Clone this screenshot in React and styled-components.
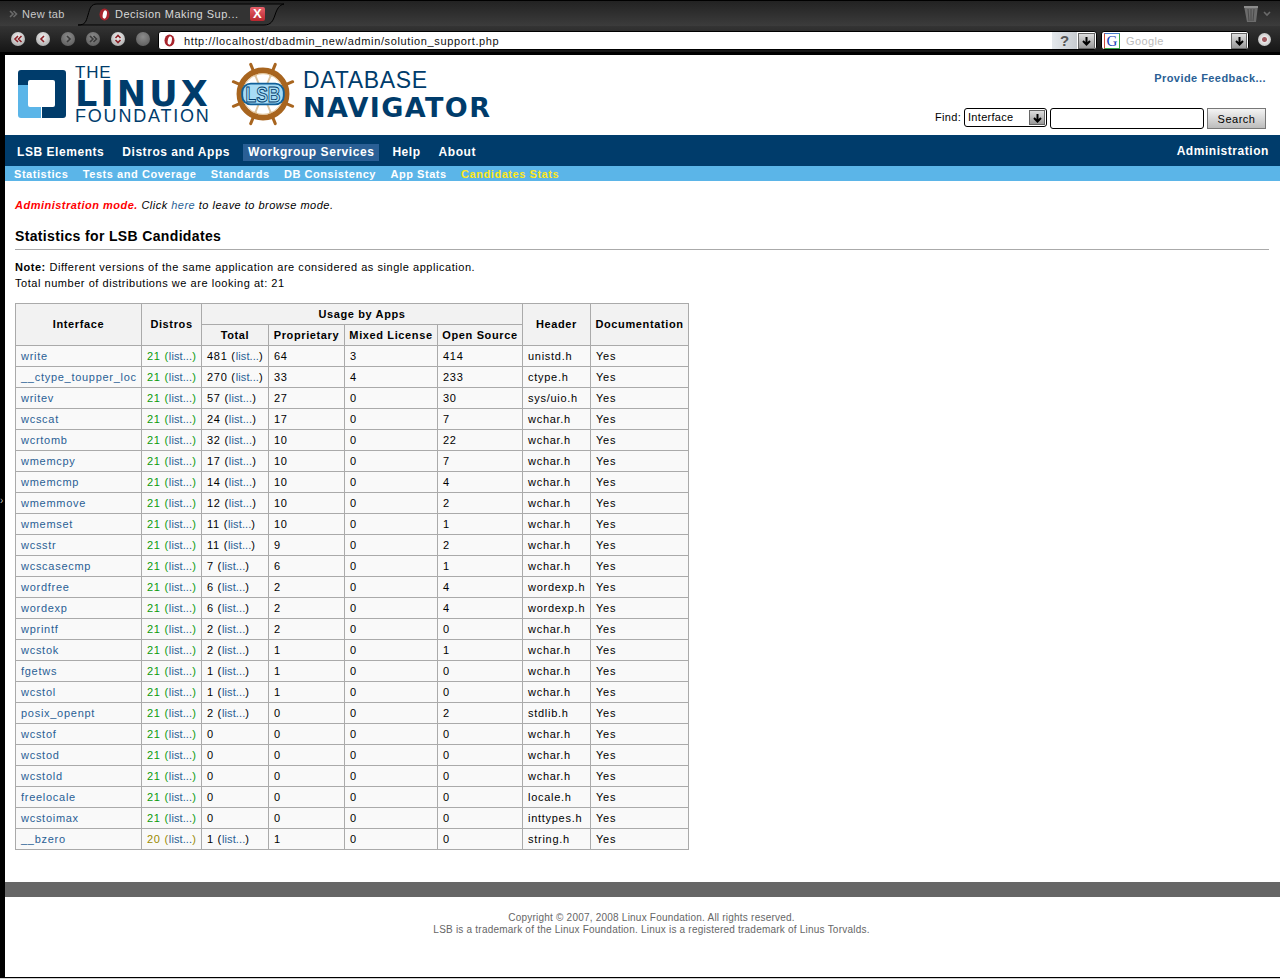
import React from 'react'
import styled, { createGlobalStyle } from 'styled-components'

const GlobalStyle = createGlobalStyle`
  html, body { margin: 0; padding: 0; height: 979px; overflow: hidden; background: #000; }
  body { font-family: "Liberation Sans", Arial, sans-serif; font-size: 11px; color: #000; }
  * { box-sizing: border-box; }
`

const rows = [
  ['write', 21, 481, 64, 3, 414, 'unistd.h'],
  ['__ctype_toupper_loc', 21, 270, 33, 4, 233, 'ctype.h'],
  ['writev', 21, 57, 27, 0, 30, 'sys/uio.h'],
  ['wcscat', 21, 24, 17, 0, 7, 'wchar.h'],
  ['wcrtomb', 21, 32, 10, 0, 22, 'wchar.h'],
  ['wmemcpy', 21, 17, 10, 0, 7, 'wchar.h'],
  ['wmemcmp', 21, 14, 10, 0, 4, 'wchar.h'],
  ['wmemmove', 21, 12, 10, 0, 2, 'wchar.h'],
  ['wmemset', 21, 11, 10, 0, 1, 'wchar.h'],
  ['wcsstr', 21, 11, 9, 0, 2, 'wchar.h'],
  ['wcscasecmp', 21, 7, 6, 0, 1, 'wchar.h'],
  ['wordfree', 21, 6, 2, 0, 4, 'wordexp.h'],
  ['wordexp', 21, 6, 2, 0, 4, 'wordexp.h'],
  ['wprintf', 21, 2, 2, 0, 0, 'wchar.h'],
  ['wcstok', 21, 2, 1, 0, 1, 'wchar.h'],
  ['fgetws', 21, 1, 1, 0, 0, 'wchar.h'],
  ['wcstol', 21, 1, 1, 0, 0, 'wchar.h'],
  ['posix_openpt', 21, 2, 0, 0, 2, 'stdlib.h'],
  ['wcstof', 21, 0, 0, 0, 0, 'wchar.h'],
  ['wcstod', 21, 0, 0, 0, 0, 'wchar.h'],
  ['wcstold', 21, 0, 0, 0, 0, 'wchar.h'],
  ['freelocale', 21, 0, 0, 0, 0, 'locale.h'],
  ['wcstoimax', 21, 0, 0, 0, 0, 'inttypes.h'],
  ['__bzero', 20, 1, 1, 0, 0, 'string.h'],
]

const Window = styled.div`
  width: 1280px;
  height: 979px;
  display: flex;
  flex-direction: column;
  background: #000;
  position: relative;
  overflow: hidden;
`

const TabBar = styled.div`
  height: 26px;
  flex: none;
  display: flex;
  align-items: flex-end;
  border-top: 1px solid #000;
  background: linear-gradient(#222, #3c3c3c);
  padding-left: 9px;
`

const NewTab = styled.div`
  display: flex;
  align-items: center;
  gap: 3px;
  width: 69px;
  height: 25px;
  color: #c8c8c8;
  font-size: 11px;
  letter-spacing: 0.35px;
`

const DimGlyph = styled.span`
  display: flex;
  color: #6a6a6a;
`

const ActiveTab = styled.div`
  position: relative;
  width: 207px;
  height: 24px;
  display: flex;
  align-items: center;
  padding-left: 20px;
  color: #d8d8d8;
  font-size: 11px;
  letter-spacing: 0.5px;
`

const TabShape = styled.svg`
  position: absolute;
  left: 0;
  top: 0;
`

const TabLabel = styled.span`
  position: relative;
  margin-left: 4px;
  width: 135px;
  white-space: nowrap;
`

const CloseBox = styled.span`
  position: relative;
  width: 15px;
  height: 14px;
  border-radius: 2px;
  background: linear-gradient(#e8606a, #b8262e);
  color: #fff;
  font: bold 13px/14px "Liberation Sans", sans-serif;
  text-align: center;
`

const TrashArea = styled.div`
  margin-left: auto;
  display: flex;
  align-items: center;
  gap: 4px;
  height: 25px;
  padding-right: 8px;
`

const ToolBar = styled.div`
  height: 26px;
  flex: none;
  display: flex;
  align-items: center;
  padding-left: 11px;
  background: linear-gradient(#343434, #161616);
`

const NavButtons = styled.div`
  display: flex;
  gap: 11px;
  width: 147px;
`

const RoundButton = styled.span`
  width: 14px;
  height: 14px;
  border-radius: 50%;
  display: flex;
  align-items: center;
  justify-content: center;
  background: ${p => p.$dim
    ? 'radial-gradient(circle at 50% 35%, #8c8c8c, #555)'
    : 'radial-gradient(circle at 50% 35%, #f4f4f4, #9a9a9a)'};
  color: ${p => p.$dim ? '#3a3a3a' : '#8a2026'};
`

const AddressBox = styled.div`
  width: 939px;
  height: 19px;
  align-self: flex-start;
  margin-top: 5px;
  display: flex;
  align-items: center;
  background: #fff;
  border: 1px solid #000;
  border-radius: 3px;
  padding-left: 4px;
  overflow: hidden;
`

const AddressText = styled.span`
  margin-left: 8px;
  flex: 1;
  font-size: 11px;
  letter-spacing: 0.63px;
  color: #111;
`

const HelpCell = styled.span`
  width: 25px;
  height: 18px;
  background: linear-gradient(90deg, #e4e8ec, #c8ccd0);
  color: #555;
  font: bold 15px/18px "Liberation Sans", sans-serif;
  text-align: center;
`

const DropArrow = styled.span`
  width: ${p => p.$w || 17}px;
  height: ${p => p.$h || 16}px;
  margin: 0 1px;
  flex: none;
  display: flex;
  align-items: center;
  justify-content: center;
  background: linear-gradient(#ddd, #999);
  border: 1px solid #666;
  color: #000;
`

const SearchBox = styled.div`
  width: 148px;
  height: 19px;
  align-self: flex-start;
  margin: 5px 0 0 4px;
  display: flex;
  align-items: center;
  background: #fff;
  border: 1px solid #000;
  border-radius: 3px;
  padding-left: 2px;
`

const GoogleIcon = styled.span`
  width: 16px;
  height: 16px;
  flex: none;
  border: 1px solid;
  border-color: #4a7fd0 #3aa64a #3aa64a #d04a3a;
  color: #2040b8;
  font: 15px/14px "Liberation Serif", serif;
  text-align: center;
`

const SearchHint = styled.span`
  flex: 1;
  margin-left: 6px;
  color: #bbb;
  font-size: 11px;
  letter-spacing: 0.4px;
`

const LastButton = styled.span`
  margin-left: 9px;
  width: 13px;
  height: 13px;
  border-radius: 50%;
  background: radial-gradient(circle, #a05a60 0 2px, #e8e8e8 3px, #aaa);
`

const ChromeGap = styled.div`
  height: 3px;
  flex: none;
  background: #000;
`

const Page = styled.div`
  flex: 1;
  margin-left: 5px;
  margin-bottom: 2px;
  display: flex;
  flex-direction: column;
  background: #fff;
  min-height: 0;
`

const Header = styled.header`
  height: 80px;
  flex: none;
  display: flex;
  justify-content: space-between;
`

const Logos = styled.div`
  display: flex;
  align-items: flex-start;
  padding-left: 13px;
`

const LinuxLogo = styled.div`
  display: flex;
  width: 211px;
  padding-top: 9px;
  color: #003c6b;
`

const LinuxWords = styled.div`
  margin-left: 9px;
  display: flex;
  flex-direction: column;
`

const LogoThe = styled.span`
  font-size: 17px;
  line-height: 17px;
  letter-spacing: 0.8px;
`

const LogoLinux = styled.span`
  font: bold 35px/26px "DejaVu Sans", sans-serif;
  letter-spacing: 3.2px;
  white-space: nowrap;
`

const LogoFoundation = styled.span`
  font-size: 18px;
  line-height: 18px;
  letter-spacing: 1.8px;
  white-space: nowrap;
`

const NavigatorLogo = styled.div`
  display: flex;
  padding-top: 5px;
  color: #003c6b;
`

const NavigatorWords = styled.div`
  margin-left: 6px;
  padding-top: 9px;
  display: flex;
  flex-direction: column;
`

const LogoDatabase = styled.span`
  font-size: 23px;
  line-height: 22px;
  letter-spacing: 0.7px;
`

const LogoNavigator = styled.span`
  margin-top: 5px;
  font: bold 27px/24px "DejaVu Sans", sans-serif;
  letter-spacing: 1.4px;
  white-space: nowrap;
`

const HeaderRight = styled.div`
  display: flex;
  flex-direction: column;
  align-items: flex-end;
  padding: 17px 14px 0 0;
`

const Feedback = styled.a`
  color: #2a5f95;
  font-weight: bold;
  font-size: 11px;
  line-height: 13px;
  letter-spacing: 0.45px;
`

const FindRow = styled.div`
  display: flex;
  align-items: flex-start;
  margin-top: 23px;
  line-height: 19px;
  letter-spacing: 0.3px;
`

const FindSelect = styled.div`
  width: 83px;
  height: 19px;
  margin-left: 3px;
  padding-left: 3px;
  display: flex;
  align-items: center;
  justify-content: space-between;
  border: 1px solid #000;
  border-radius: 3px;
  background: #fff;
`

const FindInput = styled.div`
  width: 154px;
  height: 21px;
  margin-left: 3px;
  border: 1px solid #000;
  border-radius: 3px;
  background: #fff;
`

const SearchButton = styled.div`
  width: 59px;
  height: 21px;
  margin-left: 3px;
  border: 1px solid #777;
  background: linear-gradient(#f4f4f4, #bcbcbc);
  text-align: center;
  line-height: 20px;
  letter-spacing: 0.5px;
`

const MainNav = styled.nav`
  height: 31px;
  flex: none;
  display: flex;
  align-items: center;
  padding: 4px 7px 0;
  gap: 8px;
  background: #003c6b;
`

const MainLink = styled.a`
  padding: 0 5px 1px;
  height: 17px;
  line-height: 16px;
  color: #fff;
  font-weight: bold;
  font-size: 12px;
  letter-spacing: 0.55px;
  white-space: nowrap;
  background: ${p => p.$active ? '#2a5f95' : 'transparent'};
  margin-left: ${p => p.$push ? 'auto' : '0'};
  margin-right: ${p => p.$push ? '-1px' : '0'};
  margin-top: ${p => p.$push ? '-2px' : '0'};
`

const SubNav = styled.nav`
  height: 15px;
  flex: none;
  display: flex;
  align-items: center;
  gap: 14.4px;
  padding-left: 9px;
  background: #5bb5e8;
`

const SubLink = styled.a`
  color: ${p => p.$active ? '#ffe81a' : '#fff'};
  font-weight: bold;
  font-size: 11px;
  letter-spacing: 0.55px;
  white-space: nowrap;
`

const Content = styled.main`
  flex: 1;
  padding: 17px 11px 0 10px;
  letter-spacing: 0.54px;
`

const ModeLine = styled.p`
  margin: 0;
  font-style: italic;
  line-height: 14px;
  letter-spacing: 0.49px;
`

const ModeStrong = styled.strong`
  color: #f00;
`

const TextLink = styled.a`
  color: #2a5f95;
`

const ListLink = styled.a`
  color: #2a5f95;
  letter-spacing: 0.1px;
`

const Title = styled.h2`
  margin: 15px 0 0;
  padding-bottom: 4px;
  height: 23px;
  border-bottom: 1px solid #aaa;
  font-size: 14px;
  line-height: 18px;
  letter-spacing: 0.35px;
`

const Note = styled.p`
  margin: 9px 0 0;
  line-height: 16px;
`

const StatsTable = styled.table`
  margin-top: 12px;
  width: 673px;
  table-layout: fixed;
  border-collapse: collapse;
`

const Col = styled.col`
  width: ${p => p.$w}px;
`

const Th = styled.th`
  height: 21px;
  padding: 0 0 ${p => p.rowSpan ? 2 : 0}px;
  border: 1px solid #aaa;
  background: #f2f2f2;
  font-size: 11px;
  letter-spacing: 0.62px;
  text-align: center;
  white-space: nowrap;
`

const Td = styled.td`
  height: 21px;
  padding: 0 0 0 5px;
  border: 1px solid #aaa;
  background: #f9f9f9;
  letter-spacing: 0.72px;
  white-space: nowrap;
`

const DistroCount = styled.span`
  color: ${p => p.$full ? '#0a9a0a' : '#9a8a00'};
`

const FooterBar = styled.div`
  margin-top: 31px;
  height: 15px;
  flex: none;
  background: #666;
`

const Copyright = styled.footer`
  height: 80px;
  flex: none;
  padding: 15px 0 0 18px;
  color: #666;
  text-align: center;
  font-size: 10px;
  line-height: 12px;
  letter-spacing: 0.22px;
`

const BottomEdge = styled.div`
  position: absolute;
  left: 0;
  right: 0;
  bottom: 0;
  height: 1px;
  background: #cfcfcf;
`

const SideHandle = styled.span`
  position: absolute;
  left: 0;
  top: 495px;
  color: #bbb;
  font-size: 10px;
  line-height: 12px;
`

function OperaIcon() {
  return (
    <svg width="13" height="13" viewBox="0 0 13 13" style={{ flex: 'none', position: 'relative' }}>
      <ellipse cx="6.5" cy="6.5" rx="5" ry="6" fill="#a8242c" />
      <ellipse cx="6.8" cy="6.5" rx="2" ry="4.2" fill="#fff" transform="rotate(12 6.8 6.5)" />
    </svg>
  )
}

function Glyph({ d }) {
  return (
    <svg width="10" height="10" viewBox="0 0 10 10">
      <path d={d} fill="none" stroke="currentColor" strokeWidth="1.6" />
    </svg>
  )
}

function DownArrow() {
  return (
    <svg width="11" height="10" viewBox="0 0 11 10">
      <path d="M5.5 1v6M2 5l3.5 3.5L9 5" fill="none" stroke="#000" strokeWidth="2" />
    </svg>
  )
}

function LinuxMark() {
  return (
    <svg width="48" height="48" viewBox="0 0 48 48" style={{ flex: 'none', marginTop: 6 }}>
      <path d="M3 0h42a3 3 0 0 1 3 3v42a3 3 0 0 1-3 3H24V37h11a2 2 0 0 0 2-2V12a2 2 0 0 0-2-2H12a2 2 0 0 0-2 2v3H0V3a3 3 0 0 1 3-3z" fill="#003c6b" />
      <path d="M0 15h10v20a2 2 0 0 0 2 2h11v11H3a3 3 0 0 1-3-3z" fill="#5bb5e8" />
    </svg>
  )
}

function WheelMark() {
  const spokes = [0, 45, 90, 135, 180, 225, 270, 315].map(a => a + 22.5)
  return (
    <svg width="68" height="68" viewBox="0 0 72 72" style={{ flex: 'none' }}>
      {spokes.map(a => (
        <g key={a} transform={`rotate(${a} 36 36)`}>
          <path d="M36 14V2" stroke="#a8651f" strokeWidth="3.2" strokeLinecap="round" />
          <path d="M36 26V12" stroke="#dcc4a0" strokeWidth="2" />
        </g>
      ))}
      <circle cx="36" cy="36" r="25" fill="none" stroke="#a8651f" strokeWidth="6" />
      <circle cx="36" cy="36" r="21.5" fill="none" stroke="#e0c090" strokeWidth="1" />
      <rect x="13" y="24" width="46" height="24" rx="10" fill="#0f5f98" />
      <rect x="15" y="26" width="42" height="20" rx="8" fill="#a8dcf5" />
      <text x="36" y="44" textAnchor="middle" fontFamily="Liberation Sans, sans-serif" fontWeight="bold" fontSize="23" textLength="37" lengthAdjust="spacingAndGlyphs" fill="#a8dcf5" stroke="#003c6b" strokeWidth="1">LSB</text>
    </svg>
  )
}

function TrashIcon() {
  return (
    <svg width="14" height="17" viewBox="0 0 14 17">
      <path d="M0 1h14l-2 16H3z" fill="#6c6c6c" />
      <path d="M0 1h14v2H0z" fill="#8c8c8c" />
      <path d="M4 4l1 12M7 4v12M10 4l-1 12" stroke="#4a4a4a" />
    </svg>
  )
}

export default function App() {
  const navGlyphs = [
    'M5 2L2 5l3 3M8.5 2l-3 3 3 3',
    'M6 2L3 5l3 3',
    'M4 2l3 3-3 3',
    'M2 2l3 3-3 3M5.5 2l3 3-3 3',
    'M2.5 4L5 1.5 7.5 4M2.5 6L5 8.5 7.5 6',
  ]

  return (
    <>
      <GlobalStyle />
      <Window>
        <TabBar>
          <NewTab>
            <DimGlyph><Glyph d="M1 2l3 3-3 3M4.5 2l3 3-3 3" /></DimGlyph>
            New tab
          </NewTab>
          <ActiveTab>
            <TabShape width="207" height="24" viewBox="0 0 207 24">
              <path d="M0 23c7 0 8-3 10-10s3-11 9-11h187c-5 1-7 5-9 11s-4 10-11 10z" fill="#333" stroke="#000" />
            </TabShape>
            <OperaIcon />
            <TabLabel>Decision Making Sup...</TabLabel>
            <CloseBox>X</CloseBox>
          </ActiveTab>
          <TrashArea>
            <TrashIcon />
            <DimGlyph><Glyph d="M2 3l3 3 3-3" /></DimGlyph>
          </TrashArea>
        </TabBar>
        <ToolBar>
          <NavButtons>
            {navGlyphs.map((d, i) => (
              <RoundButton key={d} $dim={i === 2 || i === 3}><Glyph d={d} /></RoundButton>
            ))}
            <RoundButton $dim />
          </NavButtons>
          <AddressBox>
            <OperaIcon />
            <AddressText>http://localhost/dbadmin_new/admin/solution_support.php</AddressText>
            <HelpCell>?</HelpCell>
            <DropArrow><DownArrow /></DropArrow>
          </AddressBox>
          <SearchBox>
            <GoogleIcon>G</GoogleIcon>
            <SearchHint>Google</SearchHint>
            <DropArrow $w={16}><DownArrow /></DropArrow>
          </SearchBox>
          <LastButton />
        </ToolBar>
        <ChromeGap />
        <Page>
          <Header>
            <Logos>
              <LinuxLogo>
                <LinuxMark />
                <LinuxWords>
                  <LogoThe>THE</LogoThe>
                  <LogoLinux>LINUX</LogoLinux>
                  <LogoFoundation>FOUNDATION</LogoFoundation>
                </LinuxWords>
              </LinuxLogo>
              <NavigatorLogo>
                <WheelMark />
                <NavigatorWords>
                  <LogoDatabase>DATABASE</LogoDatabase>
                  <LogoNavigator>NAVIGATOR</LogoNavigator>
                </NavigatorWords>
              </NavigatorLogo>
            </Logos>
            <HeaderRight>
              <Feedback>Provide Feedback...</Feedback>
              <FindRow>
                Find:
                <FindSelect>
                  Interface
                  <DropArrow $w={16} $h={15}><DownArrow /></DropArrow>
                </FindSelect>
                <FindInput />
                <SearchButton>Search</SearchButton>
              </FindRow>
            </HeaderRight>
          </Header>
          <MainNav>
            <MainLink>LSB Elements</MainLink>
            <MainLink>Distros and Apps</MainLink>
            <MainLink $active>Workgroup Services</MainLink>
            <MainLink>Help</MainLink>
            <MainLink>About</MainLink>
            <MainLink $push>Administration</MainLink>
          </MainNav>
          <SubNav>
            <SubLink>Statistics</SubLink>
            <SubLink>Tests and Coverage</SubLink>
            <SubLink>Standards</SubLink>
            <SubLink>DB Consistency</SubLink>
            <SubLink>App Stats</SubLink>
            <SubLink $active>Candidates Stats</SubLink>
          </SubNav>
          <Content>
            <ModeLine>
              <ModeStrong>Administration mode.</ModeStrong> Click <TextLink>here</TextLink> to leave to browse mode.
            </ModeLine>
            <Title>Statistics for LSB Candidates</Title>
            <Note>
              <strong>Note:</strong> Different versions of the same application are considered as single application.
              <br />
              Total number of distributions we are looking at: 21
            </Note>
            <StatsTable>
              <colgroup>
                {[126, 60, 67, 76, 93, 85, 68, 98].map((w, i) => <Col key={i} $w={w} />)}
              </colgroup>
              <thead>
                <tr>
                  <Th rowSpan={2}>Interface</Th>
                  <Th rowSpan={2}>Distros</Th>
                  <Th colSpan={4}>Usage by Apps</Th>
                  <Th rowSpan={2}>Header</Th>
                  <Th rowSpan={2}>Documentation</Th>
                </tr>
                <tr>
                  <Th>Total</Th>
                  <Th>Proprietary</Th>
                  <Th>Mixed License</Th>
                  <Th>Open Source</Th>
                </tr>
              </thead>
              <tbody>
                {rows.map(([name, distros, total, prop, mixed, open, header]) => (
                  <tr key={name}>
                    <Td><TextLink>{name}</TextLink></Td>
                    <Td>
                      <DistroCount $full={distros === 21}>
                        {distros} (<ListLink>list...</ListLink>)
                      </DistroCount>
                    </Td>
                    <Td>
                      {total}
                      {total > 0 && <> (<ListLink>list...</ListLink>)</>}
                    </Td>
                    <Td>{prop}</Td>
                    <Td>{mixed}</Td>
                    <Td>{open}</Td>
                    <Td>{header}</Td>
                    <Td>Yes</Td>
                  </tr>
                ))}
              </tbody>
            </StatsTable>
          </Content>
          <FooterBar />
          <Copyright>
            Copyright © 2007, 2008 Linux Foundation. All rights reserved.
            <br />
            LSB is a trademark of the Linux Foundation. Linux is a registered trademark of Linus Torvalds.
          </Copyright>
        </Page>
        <SideHandle>›</SideHandle>
        <BottomEdge />
      </Window>
    </>
  )
}
